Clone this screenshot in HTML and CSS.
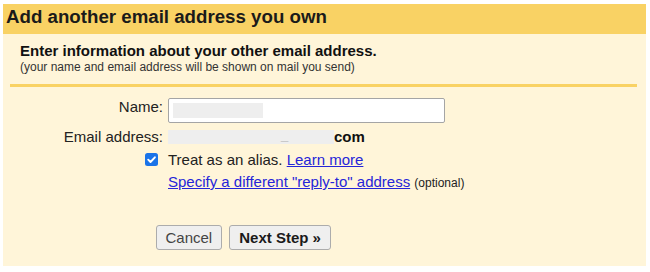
FILE: index.html
```html
<!DOCTYPE html>
<html>
<head>
<meta charset="utf-8">
<link rel="stylesheet" href="styles.css">
</head>
<body>
<div class="panel">
  <div class="title">Add another email address you own</div>
  <div class="intro">
    <div class="intro-head">Enter information about your other email address.</div>
    <div class="intro-sub">(your name and email address will be shown on mail you send)</div>
  </div>
  <div class="sep"></div>
  <div class="form">
    <div class="row row-name">
      <div class="label">Name:</div>
      <div class="value"><div class="input"><span class="redact-name"></span></div></div>
    </div>
    <div class="row row-email">
      <div class="label">Email address:</div>
      <div class="value"><span class="redact-email"><span class="uscore">_</span></span><b class="com">com</b></div>
    </div>
    <div class="row row-alias">
      <div class="label"><span class="check"><svg width="13" height="13" viewBox="0 0 13 13"><rect x="0" y="0" width="13" height="13" rx="2.5" fill="#1a73e8"/><path d="M3.2 6.7 L5.5 9 L9.9 4.3" fill="none" stroke="#fff" stroke-width="1.9" stroke-linecap="round" stroke-linejoin="round"/></svg></span></div>
      <div class="value">Treat as an alias. <a class="link" href="#">Learn more</a></div>
    </div>
    <div class="row row-reply">
      <div class="label"></div>
      <div class="value"><a class="link" href="#">Specify a different "reply-to" address</a> <span class="optional">(optional)</span></div>
    </div>
  </div>
  <div class="buttons">
    <button class="btn btn-cancel">Cancel</button>
    <button class="btn btn-next">Next Step »</button>
  </div>
</div>
</body>
</html>
```

FILE: styles.css
```css
html, body {
  margin: 0;
  padding: 0;
  background: #ffffff;
}
body {
  font-family: "Liberation Sans", Arial, sans-serif;
  color: #222222;
  width: 650px;
  height: 272px;
  overflow: hidden;
}
.panel {
  margin: 4px 4px 0 3px;
  height: 262px;
  background: #fff5d9;
}
.title {
  height: 26px;
  padding: 0 0 4px 3px;
  background: #f9d264;
  font-size: 18.7px;
  font-weight: bold;
  line-height: 26px;
  color: #1a1a1a;
}
.intro {
  padding: 7px 0 0 17px;
}
.intro-head {
  font-size: 15px;
  font-weight: bold;
  line-height: 19px;
  color: #111;
}
.intro-sub {
  font-size: 12px;
  line-height: 15px;
  color: #333;
}
.sep {
  height: 3px;
  margin: 9px 9px 0 7px;
  background: #f9d264;
}
.form {
  padding-top: 11px;
  font-size: 15px;
}
.row {
  display: grid;
  grid-template-columns: 160px 1fr;
  column-gap: 5px;
}
.label {
  text-align: right;
  line-height: 19px;
}
.value {
  line-height: 19px;
}
.row-name .label {
  line-height: 17px;
}
.row-email {
  margin-top: 4px;
}
.row-alias {
  margin-top: 4px;
  align-items: center;
}
.row-alias .label {
  display: flex;
  justify-content: flex-end;
  padding-right: 5px;
}
.check {
  display: block;
  width: 13px;
  height: 13px;
}
.check svg {
  display: block;
}
.row-reply {
  margin-top: 3px;
}
.input {
  width: 271px;
  height: 23px;
  border: 1px solid #a5a5a5;
  border-radius: 2px;
  background: #ffffff;
  display: flex;
  align-items: center;
  padding-left: 4px;
  box-sizing: content-box;
}
.redact-name {
  display: block;
  width: 90px;
  height: 15px;
  background: #eeeeee;
}
.redact-email {
  display: inline-block;
  width: 166px;
  height: 14px;
  vertical-align: -2px;
  background: #eeeeee;
  position: relative;
}
.uscore {
  position: absolute;
  left: 113px;
  top: -5px;
  font-size: 13px;
  line-height: 19px;
  color: #c4c4c4;
}
.com {
  font-weight: bold;
  color: #111;
}
.link {
  color: #2525d8;
  text-decoration: underline;
}
.optional {
  font-size: 12px;
  color: #222;
}
.buttons {
  display: flex;
  align-items: flex-start;
  gap: 7px;
  padding: 32px 0 0 153px;
}
.btn {
  margin: 0;
  height: 25px;
  padding: 0 8.5px;
  border: 1px solid #acacac;
  border-radius: 3px;
  background: #efefef;
  font-family: "Liberation Sans", Arial, sans-serif;
  font-size: 15px;
  line-height: 23px;
}
.btn-cancel {
  color: #444;
}
.btn-next {
  padding: 0 9.5px;
  font-weight: bold;
  color: #1a1a1a;
}
```
